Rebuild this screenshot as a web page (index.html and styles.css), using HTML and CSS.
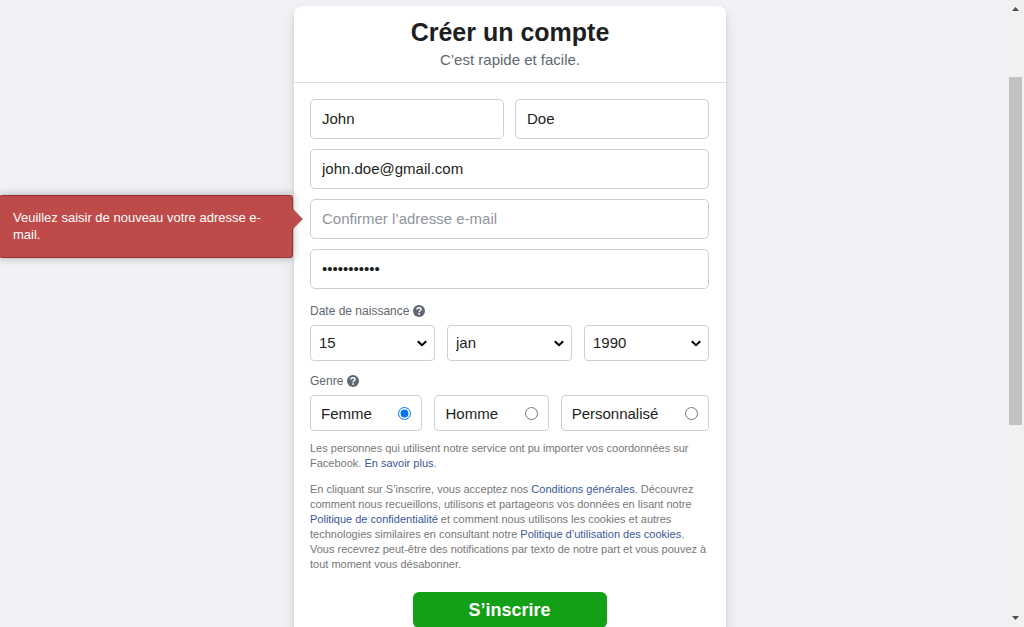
FILE: index.html
```html
<!DOCTYPE html>
<html lang="fr">
<head>
<meta charset="utf-8">
<meta name="viewport" content="width=device-width, initial-scale=1">
<title>Créer un compte</title>
<link rel="stylesheet" href="styles.css">
</head>
<body>
<div class="window">
  <main class="page">
    <section class="card">
      <header class="card-header">
        <h1 class="title">Créer un compte</h1>
        <p class="subtitle">C’est rapide et facile.</p>
      </header>
      <form class="form">
        <div class="row names">
          <input class="field" type="text" aria-label="Prénom" value="John">
          <input class="field" type="text" aria-label="Nom de famille" value="Doe">
        </div>
        <input class="field" type="text" aria-label="Adresse e-mail" value="john.doe@gmail.com">
        <div class="confirm">
          <input class="field" type="text" id="confirm" aria-describedby="confirm-error" aria-label="Confirmer l’adresse e-mail" placeholder="Confirmer l’adresse e-mail">
          <div class="error" id="confirm-error" role="alert">Veuillez saisir de nouveau votre adresse e-mail.<svg class="error-arrow" width="11" height="22" viewBox="0 0 11 22" aria-hidden="true"><path d="M0 1 10 11 0 21Z" fill="#be4b49"/><path d="M.5 1 10.300 11 .5 21" fill="none" stroke="#982e2e"/></svg></div>
        </div>
        <input class="field" type="password" aria-label="Nouveau mot de passe" value="motdepasse1">

        <div class="group birthdate">
          <div class="legend">Date de naissance
            <button class="help" type="button" aria-label="Aide sur la date de naissance"><svg width="12" height="12" viewBox="0 0 12 12" aria-hidden="true"><circle cx="6" cy="6" r="6" fill="#606770"/><path d="M4 4.600C4 3.300 4.800 2.700 6 2.700s2 .700 2 1.700c0 1.400-1.900 1.300-1.900 2.800" fill="none" stroke="#fff" stroke-width="1.500"/><circle cx="6.100" cy="9" r=".9" fill="#fff"/></svg></button>
          </div>
          <div class="row">
            <div class="select-wrap"><select class="select" aria-label="Jour"><option>15</option></select><svg class="chevron" width="10" height="7" viewBox="0 0 10 7" aria-hidden="true"><path d="M.8 1.200 5 5.200l4.200-4" fill="none" stroke="#000" stroke-width="2"/></svg></div>
            <div class="select-wrap"><select class="select" aria-label="Mois"><option>jan</option></select><svg class="chevron" width="10" height="7" viewBox="0 0 10 7" aria-hidden="true"><path d="M.8 1.200 5 5.200l4.200-4" fill="none" stroke="#000" stroke-width="2"/></svg></div>
            <div class="select-wrap"><select class="select" aria-label="Année"><option>1990</option></select><svg class="chevron" width="10" height="7" viewBox="0 0 10 7" aria-hidden="true"><path d="M.8 1.200 5 5.200l4.200-4" fill="none" stroke="#000" stroke-width="2"/></svg></div>
          </div>
        </div>

        <div class="group">
          <div class="legend">Genre
            <button class="help" type="button" aria-label="Aide sur le genre"><svg width="12" height="12" viewBox="0 0 12 12" aria-hidden="true"><circle cx="6" cy="6" r="6" fill="#606770"/><path d="M4 4.600C4 3.300 4.800 2.700 6 2.700s2 .700 2 1.700c0 1.400-1.900 1.300-1.900 2.800" fill="none" stroke="#fff" stroke-width="1.500"/><circle cx="6.100" cy="9" r=".9" fill="#fff"/></svg></button>
          </div>
          <div class="row">
            <label class="choice">Femme<input class="radio" type="radio" name="genre" checked></label>
            <label class="choice">Homme<input class="radio" type="radio" name="genre"></label>
            <label class="choice">Personnalisé<input class="radio" type="radio" name="genre"></label>
          </div>
        </div>

        <div class="terms">
          <p>Les personnes qui utilisent notre service ont pu importer vos coordonnées sur Facebook. <a href="#">En savoir plus</a>.</p>
          <p>En cliquant sur S’inscrire, vous acceptez nos <a href="#">Conditions générales</a>. Découvrez comment nous recueillons, utilisons et partageons vos données en lisant notre <a href="#">Politique de confidentialité</a> et comment nous utilisons les cookies et autres technologies similaires en consultant notre <a href="#">Politique d’utilisation des cookies</a>. Vous recevrez peut-être des notifications par texto de notre part et vous pouvez à tout moment vous désabonner.</p>
        </div>
        <button class="submit" type="submit">S’inscrire</button>
      </form>
    </section>
  </main>
  <div class="scrollbar" aria-hidden="true">
    <svg width="7" height="4" viewBox="0 0 7 4"><path d="M0 4 3.500 0 7 4Z" fill="#505050"/></svg>
    <div class="track"><div class="thumb"></div></div>
    <svg width="7" height="4" viewBox="0 0 7 4"><path d="M0 0 3.500 4 7 0Z" fill="#505050"/></svg>
  </div>
</div>
</body>
</html>
```
FILE: styles.css
```css
* { box-sizing: border-box; }

body {
  margin: 0;
  background: #f0f2f5;
  color: #1c1e21;
  font-family: "Liberation Sans", Arial, sans-serif;
}

h1, p { margin: 0; }

.window {
  display: flex;
  height: 100vh;
  overflow: hidden;
}

.page {
  flex: 1;
  display: flex;
  justify-content: center;
  align-items: flex-start;
  padding: 6px 0 0 13px;
}

.card {
  width: 100%;
  max-width: 432px;
  background: #fff;
  border-radius: 8px;
  box-shadow: 0 2px 4px rgba(0, 0, 0, .1), 0 8px 16px rgba(0, 0, 0, .1);
}

.card-header {
  padding: 10px 16px;
  border-bottom: 1px solid #dadde1;
  text-align: center;
}

.title {
  font-size: 25px;
  line-height: 32px;
}

.subtitle {
  color: #606770;
  font-size: 15px;
  line-height: 24px;
}

.form {
  display: flex;
  flex-direction: column;
  gap: 10px;
  padding: 16px 17px 24px 16px;
}

.row {
  display: flex;
  gap: 12px;
}

.names { gap: 11px; }

.field {
  width: 100%;
  min-width: 0;
  height: 40px;
  padding: 0 11px 2px;
  border: 1px solid #ccd0d5;
  border-radius: 5px;
  background: #fff;
  color: #1c1e21;
  font: 15px "Liberation Sans", Arial, sans-serif;
}

.field::placeholder { color: #90949c; }

.confirm { position: relative; }

.error {
  position: absolute;
  top: -4px;
  right: calc(100% + 17px);
  width: 294px;
  padding: 13px 24px 14px 13px;
  border: 1px solid #982e2e;
  border-radius: 3px;
  background: #be4b49;
  box-shadow: 0 0 8px rgba(0, 0, 0, .3);
  color: #fff;
  font-size: 13px;
  line-height: 17px;
}

.error-arrow {
  position: absolute;
  left: 100%;
  top: 12px;
}

.group {
  display: flex;
  flex-direction: column;
  gap: 4px;
}

.birthdate { margin-top: 2px; }

.legend {
  display: flex;
  align-items: center;
  gap: 4px;
  height: 20px;
  color: #606770;
  font-size: 12px;
}

.help {
  display: flex;
  padding: 0;
  border: 0;
  background: none;
}

.select-wrap {
  position: relative;
  flex: 1;
}

.select {
  display: block;
  width: 100%;
  height: 36px;
  padding: 0 8px 2px;
  border: 1px solid #ccd0d5;
  border-radius: 4px;
  background: #fff;
  color: #1c1e21;
  font: 15px "Liberation Sans", Arial, sans-serif;
  appearance: none;
}

.chevron {
  position: absolute;
  top: 15px;
  right: 8px;
  pointer-events: none;
}

.choice {
  flex: 1 1 auto;
  display: flex;
  align-items: center;
  justify-content: space-between;
  height: 36px;
  padding: 0 10px;
  border: 1px solid #ccd0d5;
  border-radius: 4px;
  font-size: 15px;
}

.radio {
  width: 13px;
  height: 13px;
  margin: 0;
  accent-color: #0075ff;
}

.terms {
  display: flex;
  flex-direction: column;
  gap: 11px;
  color: #777;
  font-size: 11px;
  line-height: 15px;
}

.terms a {
  color: #385898;
  text-decoration: none;
}

.submit {
  align-self: center;
  width: 194px;
  height: 36px;
  margin-top: 10px;
  border: 0;
  border-radius: 6px;
  background: #13a016;
  color: #fff;
  font: bold 18px "Liberation Sans", Arial, sans-serif;
}

.scrollbar {
  display: flex;
  flex-direction: column;
  align-items: center;
  flex: none;
  width: 17px;
  padding: 7px 2px;
  background: #f1f1f1;
}

.track {
  flex: 1;
  width: 13px;
  padding: 66px 0 191px;
}

.thumb {
  height: 100%;
  background: #c1c1c1;
}
```
